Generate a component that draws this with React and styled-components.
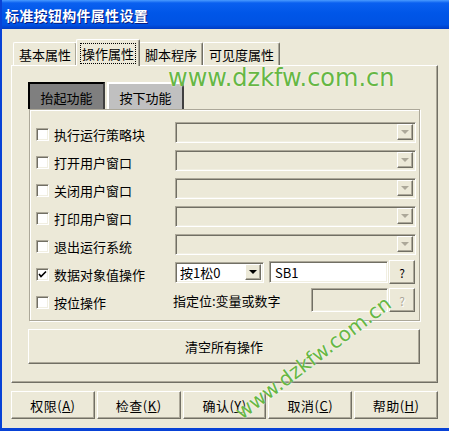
import styled, { createGlobalStyle, css } from 'styled-components';

const GlobalStyle = createGlobalStyle`
  html, body {
    margin: 0;
    padding: 0;
    overflow: hidden;
    background: #ece9d8;
  }
  body {
    font-family: "Noto Sans CJK SC", "Noto Sans", sans-serif;
    font-size: 13px;
    color: #000;
  }
`;

const raised = css`
  border-top: 1px solid #fff;
  border-left: 1px solid #fff;
  border-right: 1px solid #716f64;
  border-bottom: 1px solid #716f64;
  box-shadow: inset -1px -1px #aca899;
`;

const sunken = css`
  border-top: 1px solid #aca899;
  border-left: 1px solid #aca899;
  border-right: 1px solid #fff;
  border-bottom: 1px solid #fff;
  box-shadow: inset 1px 1px #716f64, inset -1px -1px #f1efe2;
`;

const Window = styled.div`
  position: relative;
  width: 449px;
  height: 431px;
  box-sizing: border-box;
  display: flex;
  flex-direction: column;
  border-left: 2px solid #0842d6;
  border-bottom: 3px solid #0842d6;
  overflow: hidden;
`;

const TitleBar = styled.div`
  height: 29px;
  flex-shrink: 0;
  display: flex;
  align-items: center;
  padding-left: 3px;
  background: linear-gradient(#4a9bff 0, #0a60f0 3px, #0056e8 45%, #0052e3 85%, #003cc4 100%);
  color: #fff;
  font-weight: bold;
  font-size: 14px;
  text-shadow: 1px 1px #0a1d80;
  letter-spacing: 0.3px;
`;

const Body = styled.div`
  display: flex;
  flex-direction: column;
  padding: 10px 11px 0 9px;
`;

const TabStrip = styled.div`
  display: flex;
  align-items: flex-end;
  height: 26px;
  padding-left: 2px;
`;

const Tab = styled.div`
  position: relative;
  height: 23px;
  box-sizing: border-box;
  padding: 0 5px;
  display: flex;
  align-items: center;
  justify-content: center;
  background: #ece9d8;
  border-top: 1px solid #fff;
  border-left: 1px solid #fff;
  border-right: 1px solid #716f64;
  border-radius: 2px 2px 0 0;
  box-shadow: inset -1px 0 #aca899;
  ${(p) =>
    p.$active &&
    css`
      height: 27px;
      margin: 0 -1px -1px -1px;
      padding: 0 5px;
      z-index: 1;
    `}
`;

const TabText = styled.span`
  line-height: 17px;
  outline: ${(p) => (p.$focus ? '1px dotted #000' : 'none')};
  outline-offset: 1px;
`;

const TabPanel = styled.div`
  height: 318px;
  box-sizing: border-box;
  ${raised}
  padding: 16px 18px 0 16px;
  display: flex;
  flex-direction: column;
`;

const InnerTabs = styled.div`
  display: flex;
  gap: 2px;
  height: 27px;
`;

const InnerTab = styled.div`
  width: 77px;
  box-sizing: border-box;
  display: flex;
  align-items: center;
  justify-content: center;
  padding-top: 2px;
  border-right: 2px solid #404040;
  ${(p) =>
    p.$active
      ? css`
          background: #7f7f7f;
          border-top: 2px solid #000;
          border-left: 2px solid #000;
        `
      : css`
          background: #c0c0c0;
          border-top: 2px solid #fff;
          border-left: 2px solid #fff;
        `}
`;

const InnerPanel = styled.div`
  width: 391px;
  height: 212px;
  box-sizing: border-box;
  margin-left: 1px;
  border: 1px solid #aca899;
  box-shadow: inset 1px 1px #fff, 1px 1px #fff;
  padding: 8px 0 0 6px;
  display: flex;
  flex-direction: column;
`;

const Row = styled.div`
  height: 28px;
  display: flex;
  align-items: center;
`;

const CheckLabel = styled.label`
  width: 139px;
  flex-shrink: 0;
  display: flex;
  align-items: center;
  gap: 5px;
  padding-top: 4px;
`;

const Box = styled.span`
  width: 13px;
  height: 13px;
  box-sizing: border-box;
  background: #fff;
  ${sunken}
  display: flex;
  align-items: center;
  justify-content: center;
`;

const Combo = styled.div`
  width: ${(p) => p.$w}px;
  height: 21px;
  box-sizing: border-box;
  ${sunken}
  background: ${(p) => (p.$disabled ? '#ece9d8' : '#fff')};
  display: flex;
  align-items: center;
  justify-content: space-between;
  padding: 0 2px 0 4px;
`;

const DropButton = styled.span`
  width: 16px;
  height: 16px;
  box-sizing: border-box;
  background: #ece9d8;
  ${raised}
  display: flex;
  align-items: center;
  justify-content: center;
`;

const Arrow = styled.span`
  width: 0;
  height: 0;
  border-left: 4px solid transparent;
  border-right: 4px solid transparent;
  border-top: 4px solid ${(p) => (p.$disabled ? '#aca899' : '#000')};
`;

const TextField = styled.div`
  width: ${(p) => p.$w}px;
  height: ${(p) => p.$h}px;
  box-sizing: border-box;
  margin-left: ${(p) => p.$ml || 0}px;
  ${sunken}
  background: ${(p) => (p.$disabled ? '#ece9d8' : '#fff')};
  display: flex;
  align-items: center;
  padding-left: 5px;
  font-size: 13px;
`;

const HelpButton = styled.div`
  width: 26px;
  height: 24px;
  box-sizing: border-box;
  margin-left: 1px;
  ${raised}
  display: flex;
  align-items: center;
  justify-content: center;
  font-size: 12px;
  color: ${(p) => (p.$disabled ? '#aca899' : '#000')};
  text-shadow: ${(p) => (p.$disabled ? '1px 1px #fff' : 'none')};
`;

const Hint = styled.span`
  width: 138px;
  margin-left: -2px;
  flex-shrink: 0;
`;

const ClearButton = styled.div`
  width: 392px;
  height: 35px;
  box-sizing: border-box;
  margin-top: 8px;
  ${raised}
  display: flex;
  align-items: center;
  justify-content: center;
`;

const ButtonRow = styled.div`
  display: flex;
  gap: 2px;
  margin-top: 8px;
`;

const Button = styled.div`
  width: 84px;
  height: 28px;
  box-sizing: border-box;
  ${raised}
  display: flex;
  align-items: center;
  justify-content: center;
  letter-spacing: 0.5px;
  u {
    text-decoration: underline;
  }
`;

const Watermark = styled.span`
  position: absolute;
  left: ${(p) => p.$x}px;
  top: ${(p) => p.$y}px;
  font-family: "DejaVu Sans", sans-serif;
  font-size: ${(p) => p.$size}px;
  color: #66b744;
  text-shadow: 0 0 2px #fff;
  white-space: nowrap;
  transform-origin: 0 100%;
  transform: rotate(${(p) => p.$rot || 0}deg);
  pointer-events: none;
  z-index: 5;
`;

const Check = () => (
  <svg width="9" height="9" viewBox="0 0 9 9">
    <polyline points="1,4 3,6.5 8,1.5" fill="none" stroke="#000" strokeWidth="1.6" />
  </svg>
);

const rows = ['执行运行策略块', '打开用户窗口', '关闭用户窗口', '打印用户窗口', '退出运行系统'];

const buttons = [
  ['权限', 'A'],
  ['检查', 'K'],
  ['确认', 'Y'],
  ['取消', 'C'],
  ['帮助', 'H'],
];

export default function App() {
  return (
    <>
      <GlobalStyle />
      <Window>
        <TitleBar>标准按钮构件属性设置</TitleBar>
        <Body>
          <TabStrip>
            <Tab><TabText>基本属性</TabText></Tab>
            <Tab $active><TabText $focus>操作属性</TabText></Tab>
            <Tab><TabText>脚本程序</TabText></Tab>
            <Tab><TabText>可见度属性</TabText></Tab>
          </TabStrip>
          <TabPanel>
            <InnerTabs>
              <InnerTab $active>抬起功能</InnerTab>
              <InnerTab>按下功能</InnerTab>
            </InnerTabs>
            <InnerPanel>
              {rows.map((r) => (
                <Row key={r}>
                  <CheckLabel>
                    <Box />
                    {r}
                  </CheckLabel>
                  <Combo $w={241} $disabled>
                    <span />
                    <DropButton><Arrow $disabled /></DropButton>
                  </Combo>
                </Row>
              ))}
              <Row>
                <CheckLabel>
                  <Box><Check /></Box>
                  数据对象值操作
                </CheckLabel>
                <Combo $w={89}>
                  <span>按1松0</span>
                  <DropButton><Arrow /></DropButton>
                </Combo>
                <TextField $w={119} $h={22} $ml={5}>SB1</TextField>
                <HelpButton>?</HelpButton>
              </Row>
              <Row>
                <CheckLabel>
                  <Box />
                  按位操作
                </CheckLabel>
                <Hint>指定位:变量或数字</Hint>
                <TextField $w={77} $h={24} $disabled />
                <HelpButton $disabled>?</HelpButton>
              </Row>
            </InnerPanel>
            <ClearButton>清空所有操作</ClearButton>
          </TabPanel>
          <ButtonRow>
            {buttons.map(([t, k]) => (
              <Button key={k}>
                {t}(<u>{k}</u>)
              </Button>
            ))}
          </ButtonRow>
        </Body>
        <Watermark $x={166} $y={64} $size={24}>www.dzkfw.com.cn</Watermark>
        <Watermark $x={243} $y={400} $size={20} $rot={-37}>www.dzkfw.com.cn</Watermark>
      </Window>
    </>
  );
}
